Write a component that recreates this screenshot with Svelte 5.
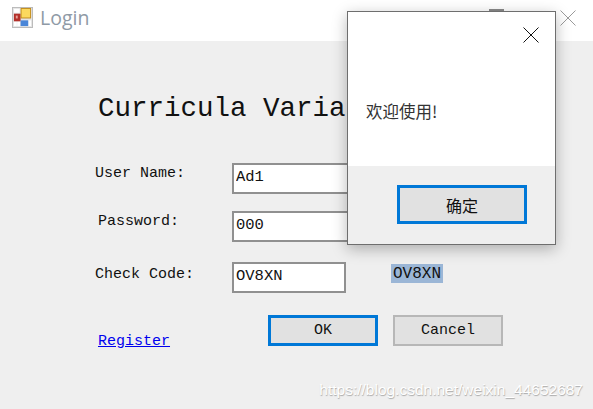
<script>
  let userName = 'Ad1';
  let password = '000';
  let checkCode = 'OV8XN';
</script>

<div class="window">
  <header class="titlebar">
    <svg class="app-icon" width="21" height="21" viewBox="0 0 22 22">
      <rect x="0.500" y="0.500" width="21" height="21" fill="#e4e4e4" stroke="#b9b9b9" />
      <rect x="2" y="2" width="6" height="4" fill="#fff" />
      <rect x="2" y="15" width="3" height="5" fill="#fff" />
      <rect x="5.500" y="15" width="3" height="5" fill="#fff" />
      <rect x="17" y="14" width="3" height="6" fill="#fff" />
      <rect x="2" y="7" width="7" height="8" fill="#b3302a" />
      <rect x="4" y="9" width="2" height="3" fill="#e8a09a" />
      <rect x="9" y="1" width="11" height="11" fill="#c08a1c" />
      <rect x="10" y="2" width="9" height="9" fill="#fbd95e" />
      <rect x="9" y="14" width="8" height="6" fill="#4a86d8" />
    </svg>
    <span class="title">Login</span>
    <div class="controls">
      <span class="minimize"></span>
      <svg width="16" height="16" viewBox="0 0 16 16">
        <path d="M0.500 0.500 15.500 15.500M15.500 0.500 0.500 15.500" stroke="#9a9a9a" fill="none" />
      </svg>
    </div>
  </header>

  <main class="form">
    <h1>Curricula Varia</h1>

    <div class="row first">
      <label for="user">User Name:</label>
      <input id="user" class="wide" value={userName} readonly />
    </div>
    <div class="row second">
      <label class="inset" for="pass">Password:</label>
      <input id="pass" class="wide" value={password} readonly />
    </div>
    <div class="row third">
      <label for="code">Check Code:</label>
      <input id="code" value={checkCode} readonly />
      <span class="captcha">{checkCode}</span>
    </div>

    <div class="actions">
      <a href="#register">Register</a>
      <button class="primary">OK</button>
      <button class="cancel">Cancel</button>
    </div>
  </main>

  <span class="watermark">https://blog.csdn.net/weixin_44652687</span>

  <div class="dialog">
    <div class="dialog-body">
      <svg class="dialog-close" width="16" height="16" viewBox="0 0 16 16">
        <path d="M0.500 0.500 15.500 15.500M15.500 0.500 0.500 15.500" stroke="#111" fill="none" />
      </svg>
      <p>欢迎使用!</p>
    </div>
    <div class="dialog-footer">
      <button class="primary confirm">确定</button>
    </div>
  </div>
</div>

<style>
  :global(body) {
    margin: 0;
  }
  .window {
    position: relative;
    width: 593px;
    height: 409px;
    overflow: hidden;
    background: #efefef;
    color: #111;
    font-family: "Liberation Mono", monospace;
  }
  .titlebar {
    display: flex;
    align-items: center;
    height: 41px;
    padding: 0 17px 7px 12px;
    box-sizing: border-box;
    background: #fff;
  }
  .app-icon {
    flex: none;
  }
  .title {
    margin-left: 7px;
    font: 19.500px "Open Sans", sans-serif;
    color: #8f9aa6;
  }
  .controls {
    display: flex;
    align-items: flex-start;
    gap: 56px;
    margin-left: auto;
    padding-top: 2px;
  }
  .minimize {
    width: 15px;
    height: 2px;
    margin-top: -1px;
    background: #8a8a8a;
  }
  .form {
    padding-left: 95px;
  }
  h1 {
    margin: 0;
    padding: 52px 0 0 3px;
    height: 72px;
    box-sizing: border-box;
    font-size: 27.500px;
    font-weight: 400;
    line-height: 32px;
    white-space: nowrap;
  }
  .row {
    display: flex;
    align-items: flex-start;
    height: 31px;
  }
  .first {
    margin-top: 50px;
  }
  .second {
    margin-top: 17px;
  }
  .third {
    margin-top: 20px;
  }
  label {
    width: 137px;
    flex: none;
    box-sizing: border-box;
    padding-top: 2px;
    font-size: 15px;
    line-height: 18px;
  }
  .third label {
    padding-top: 4px;
  }
  .inset {
    padding-left: 3px;
  }
  input {
    width: 114px;
    height: 31px;
    box-sizing: border-box;
    padding: 0 2px 3px;
    border: 2px solid #909090;
    border-radius: 0;
    outline: none;
    background: #fff;
    color: #111;
    font: 15.500px "Liberation Mono", monospace;
  }
  .wide {
    width: 200px;
  }
  .captcha {
    margin: 2px 0 0 45px;
    padding: 1px 2px 0;
    height: 18px;
    background: #9bb6d6;
    font-size: 16px;
    line-height: 19px;
  }
  .actions {
    display: flex;
    align-items: flex-start;
    margin-top: 22px;
  }
  a {
    width: 173px;
    flex: none;
    margin-left: 3px;
    margin-right: -3px;
    padding-top: 18px;
    color: #0000ee;
    font-size: 15px;
    line-height: 18px;
  }
  button {
    padding: 0;
    border-radius: 0;
    background: #e1e1e1;
    color: #111;
    font-family: inherit;
  }
  .actions button {
    width: 110px;
    height: 31px;
    box-sizing: border-box;
    font-size: 15px;
  }
  .primary {
    border: 3px solid #0078d7;
  }
  .actions .cancel {
    margin-left: 15px;
    border: 2px solid #b7b7b7;
  }
  .dialog {
    position: absolute;
    left: 347px;
    top: 11px;
    display: flex;
    flex-direction: column;
    width: 209px;
    height: 234px;
    box-sizing: border-box;
    border: 1px solid #6e6e6e;
    background: #efefef;
    box-shadow: 0 4px 14px rgba(0, 0, 0, 0.28);
  }
  .dialog-body {
    position: relative;
    height: 154px;
    background: #fff;
  }
  .dialog-close {
    position: absolute;
    left: 175px;
    top: 15px;
  }
  .dialog-body p {
    margin: 0;
    padding: 88px 0 0 18px;
    font: 16.500px/22px "Noto Sans CJK SC", sans-serif;
    color: #333;
  }
  .dialog-footer {
    padding: 19px 0 0 49px;
  }
  .confirm {
    width: 130px;
    height: 39px;
    box-sizing: border-box;
    font: 16px "Noto Sans CJK SC", sans-serif;
  }
  .watermark {
    position: absolute;
    right: 10px;
    top: 381px;
    font: 15.500px/18px "Liberation Sans", sans-serif;
    color: #fff;
    text-shadow: 0.500px 0.500px 1px #a8a8a8;
  }
</style>
